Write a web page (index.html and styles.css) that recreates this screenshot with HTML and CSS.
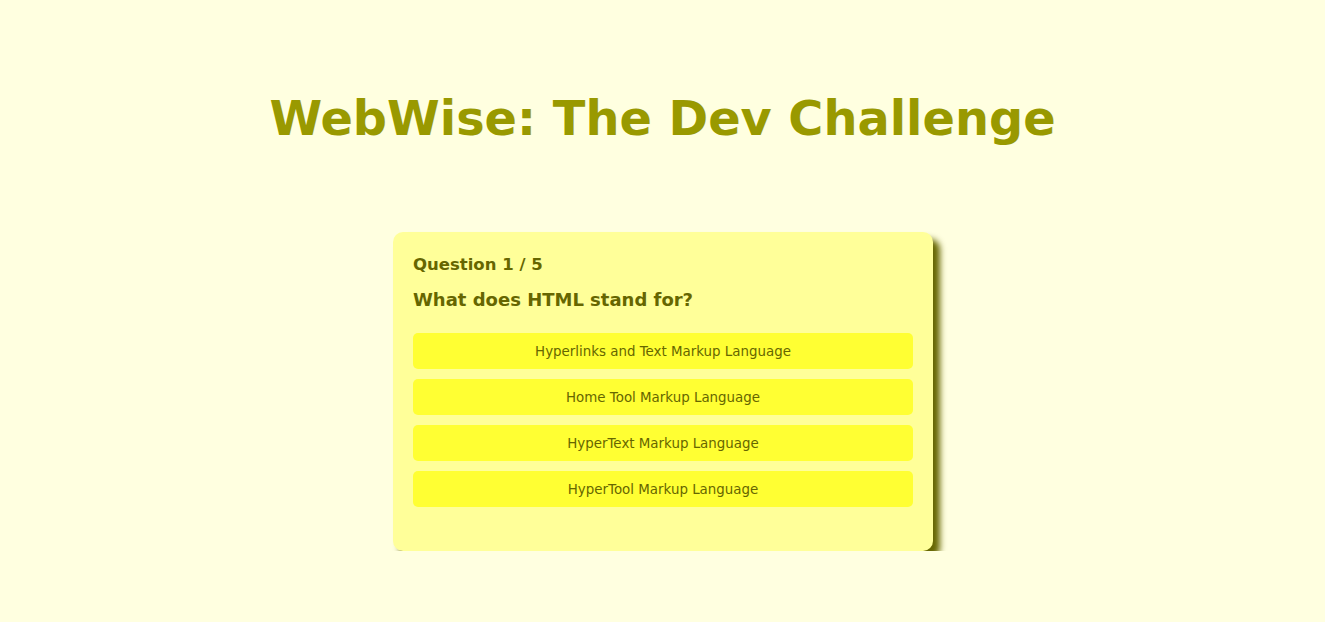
FILE: index.html
```html
<!DOCTYPE html>
<html lang="en">
<head>
<meta charset="utf-8">
<title>WebWise: The Dev Challenge</title>
<link rel="stylesheet" href="styles.css">
</head>
<body>
<h1 class="title">WebWise: The Dev Challenge</h1>
<main class="quiz">
  <div class="quiz-counter">Question 1 / 5</div>
  <h2 class="quiz-question">What does HTML stand for?</h2>
  <div class="answers">
    <button class="answer">Hyperlinks and Text Markup Language</button>
    <button class="answer">Home Tool Markup Language</button>
    <button class="answer">HyperText Markup Language</button>
    <button class="answer">HyperTool Markup Language</button>
  </div>
</main>
</body>
</html>
```

FILE: styles.css
```css
html, body {
  margin: 0;
  padding: 0;
}
body {
  background: #ffffe0;
  font-family: Verdana, "DejaVu Sans", sans-serif;
  display: flex;
  flex-direction: column;
  align-items: center;
  padding-top: 87px;
}
.title {
  margin: 0;
  font-size: 47.8px;
  font-weight: bold;
  color: #999900;
  line-height: 64px;
}
.quiz {
  margin-top: 81px;
  width: 500px;
  padding: 21px 20px 44px;
  background: #ffff99;
  border-radius: 10px;
  box-shadow: 7px 7px 6px #666600;
  margin-left: 1px;
}
.quiz-counter {
  font-weight: bold;
  font-size: 16.5px;
  color: #666600;
  line-height: 24px;
}
.quiz-question {
  margin: 11px 0 21px;
  font-size: 18px;
  line-height: 24px;
  color: #666600;
}
.answers {
  display: flex;
  flex-direction: column;
  gap: 10px;
}
.answer {
  height: 36px;
  border: none;
  border-radius: 5px;
  background: #ffff33;
  color: #666600;
  font-family: Verdana, "DejaVu Sans", sans-serif;
  font-size: 13.4px;
  cursor: pointer;
}
```
